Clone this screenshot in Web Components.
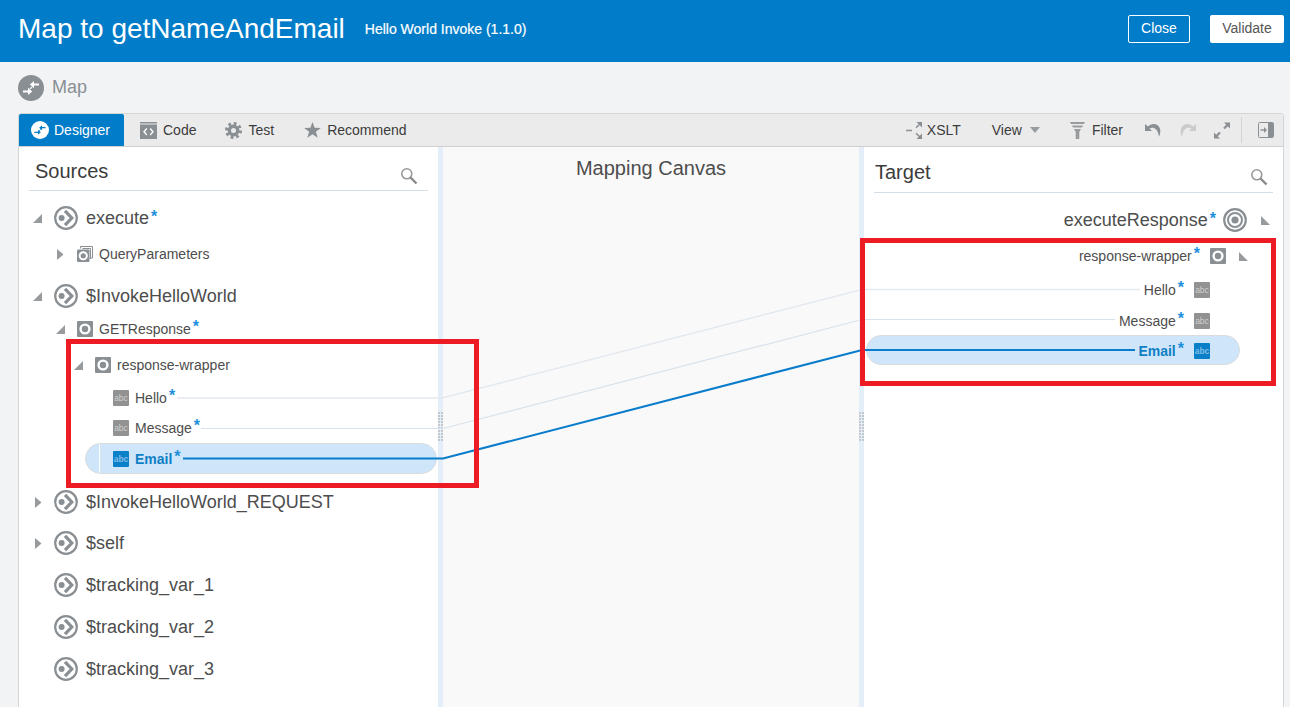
<!DOCTYPE html>
<html>
<head>
<meta charset="utf-8">
<title>Map to getNameAndEmail</title>
<style>
  html, body { margin: 0; height: 707px; overflow: hidden; background: #f2f3f5; font-family: "Liberation Sans", Arial, sans-serif; }
</style>
</head>
<body>
<map-page>
  <map-header slot="header" heading="Map to getNameAndEmail" sub="Hello World Invoke (1.1.0)"></map-header>
  <map-toolbar slot="toolbar"></map-toolbar>

  <tree-panel slot="sources" heading="Sources" style="--head:44px;--pad-l:6px;--pad-r:10px">
    <tree-row big star toggle="open" icon="exec" style="margin-top:9px">execute</tree-row>
    <tree-row level="1" toggle="closed" icon="query" style="margin-top:3px">QueryParameters</tree-row>
    <tree-row big toggle="open" icon="exec" style="margin-top:9px">$InvokeHelloWorld</tree-row>
    <tree-row level="1" star toggle="open" icon="node">GETResponse</tree-row>
    <tree-row level="2" toggle="open" icon="node" style="margin-top:6px">response-wrapper</tree-row>
    <tree-row level="3" star icon="abc" style="margin-top:3px">Hello</tree-row>
    <tree-row level="3" star icon="abc">Message</tree-row>
    <tree-row level="3" star icon="abc" selected>Email</tree-row>
    <tree-row big toggle="closed" icon="exec" style="margin-top:10px">$InvokeHelloWorld_REQUEST</tree-row>
    <tree-row big toggle="closed" icon="exec" style="margin-top:5px">$self</tree-row>
    <tree-row big toggle="none" icon="exec" style="margin-top:6px">$tracking_var_1</tree-row>
    <tree-row big toggle="none" icon="exec" style="margin-top:6px">$tracking_var_2</tree-row>
    <tree-row big toggle="none" icon="exec" style="margin-top:6px">$tracking_var_3</tree-row>
  </tree-panel>

  <tree-panel slot="target" heading="Target" style="--head:46px;--pad-l:1px;--pad-r:5px">
    <tree-row right big star toggle="open" icon="target" style="margin-top:9px">executeResponse</tree-row>
    <tree-row right level="2" star toggle="open" icon="node" style="margin-top:3px">response-wrapper</tree-row>
    <tree-row right level="3" star icon="abc" style="margin-top:4px">Hello</tree-row>
    <tree-row right level="3" star icon="abc" style="margin-top:1px">Message</tree-row>
    <tree-row right level="3" star icon="abc" selected style="margin-top:-1px">Email</tree-row>
  </tree-panel>
</map-page>

<script>
const GRAY = '#8a8f94';

function mapArrows(c) {
  return `<path d="M21 9.600H15.500M5 16.400H10.500" stroke="${c}" stroke-width="2"/><path d="M11.800 9.600 16 6V13.200zM14.200 16.400 10 12.800V20z" fill="${c}"/><path d="M12 13.800 14 12.200" stroke="${c}" stroke-width="1.400"/>`;
}

// every icon of the screen, keyed by name
const ICONS = {
  exec: `<svg width="24" height="24" viewBox="0 0 24 24"><circle cx="12" cy="12" r="10.800" fill="none" stroke="${GRAY}" stroke-width="2.200"/><circle cx="7.600" cy="12" r="3" fill="${GRAY}"/><path d="M11 4.800 17.800 12 11 19.200" fill="none" stroke="${GRAY}" stroke-width="3.200"/></svg>`,
  target: `<svg width="24" height="24" viewBox="0 0 24 24"><circle cx="12" cy="12" r="10.800" fill="none" stroke="${GRAY}" stroke-width="2.200"/><circle cx="12" cy="12" r="7" fill="none" stroke="${GRAY}" stroke-width="2"/><circle cx="12" cy="12" r="3.600" fill="${GRAY}"/></svg>`,
  node: `<svg width="16" height="16" viewBox="0 0 16 16"><rect width="16" height="16" rx="1" fill="${GRAY}"/><circle cx="8" cy="8" r="4.400" fill="none" stroke="#fff" stroke-width="2.400"/></svg>`,
  query: `<svg width="16" height="16" viewBox="0 0 16 16"><path d="M3.500 2.500V.5H15.500V12H13.500M5.500 2.500H13.500V13" fill="none" stroke="${GRAY}"/><rect y="3.500" width="12.500" height="12.500" rx="1" fill="${GRAY}"/><circle cx="6.250" cy="9.750" r="3.600" fill="none" stroke="#fff" stroke-width="2"/></svg>`,
  abc: `<svg width="16" height="16" viewBox="0 0 16 16"><rect width="16" height="16" rx="1" fill="var(--abc-bg,#929292)"/><text x="8" y="10.800" font-family="Liberation Sans, Arial, sans-serif" font-size="8.500" text-anchor="middle" fill="var(--abc-fg,#cfcfcf)">abc</text></svg>`,
  map: `<svg width="26" height="26" viewBox="0 0 26 26"><circle cx="13" cy="13" r="13" fill="${GRAY}"/>${mapArrows('#fff')}</svg>`,
  designer: `<svg width="18" height="18" viewBox="0 0 26 26"><circle cx="13" cy="13" r="13" fill="#fff"/>${mapArrows('#007cc8')}</svg>`,
  code: `<svg width="17" height="17" viewBox="0 0 17 17"><rect width="17" height="1.500" fill="${GRAY}"/><rect y="2.500" width="17" height="14.500" fill="${GRAY}"/><path d="M6.800 6.500 4 9.700 6.800 13M10.200 6.500 13 9.700 10.200 13" fill="none" stroke="#fff" stroke-width="1.400"/></svg>`,
  gear: `<svg width="17" height="17" viewBox="0 0 17 17"><circle cx="8.500" cy="8.500" r="7" fill="none" stroke="${GRAY}" stroke-width="3" stroke-dasharray="2.750 2.750"/><circle cx="8.500" cy="8.500" r="4.200" fill="none" stroke="${GRAY}" stroke-width="3.400"/></svg>`,
  star: `<svg width="17" height="16" viewBox="0 0 17 16"><path d="M8.500 0 10.600 5.800 16.800 6 11.900 9.800 13.700 15.800 8.500 12.300 3.300 15.800 5.100 9.800.2 6 6.400 5.800z" fill="${GRAY}"/></svg>`,
  xslt: `<svg width="17" height="17" viewBox="0 0 17 17"><path d="M0 8.500H6" stroke="${GRAY}" stroke-width="1.500"/><path d="M10 5.800 14.500 1.500M10 11.200 14.500 15.500" stroke="${GRAY}" stroke-width="1.500"/><path d="M16 0V5.500L10.500 0zM16 17V11.500L10.500 17z" fill="${GRAY}"/></svg>`,
  filter: `<svg width="15" height="17" viewBox="0 0 15 17"><path d="M0 0H15L14 2H1zM2 3.500H13L12 5.500H3zM4 7H11L9.300 10V17H5.700V10z" fill="#999c9f"/></svg>`,
  undo: `<svg width="17" height="15" viewBox="0 0 17 15"><path d="M0 1V8H7L4.500 5.500C8 3.500 13 5 14 13.800 17 8 15 1 8.500 1 6.500 1 4.500 2 3 3.500Z" fill="${GRAY}"/></svg>`,
  redo: `<svg width="17" height="15" viewBox="0 0 17 15"><path d="M17 1V8H10L12.500 5.500C9 3.500 4 5 3 13.800 0 8 2 1 8.500 1 10.500 1 12.500 2 14 3.500Z" fill="#c9cbcd"/></svg>`,
  expand: `<svg width="18" height="17" viewBox="0 0 18 17"><path d="M1 16.500V10.500L7 16.500zM17 .5V6.500L11 .5z" fill="${GRAY}"/><path d="M7 10.500 3.500 14M11 6.500 14.500 3" stroke="${GRAY}" stroke-width="2.200"/></svg>`,
  dock: `<svg width="16" height="16" viewBox="0 0 16 16"><rect x=".5" y=".5" width="15" height="15" rx="1" fill="none" stroke="${GRAY}"/><rect x="10" y="1" width="5" height="14" fill="${GRAY}"/><path d="M2.500 8H7" stroke="${GRAY}" stroke-width="1.400"/><path d="M6 5 9 8 6 11z" fill="${GRAY}"/></svg>`,
  search: `<svg width="18" height="18" viewBox="0 0 18 18"><circle cx="6.800" cy="6.800" r="5" fill="none" stroke="#999" stroke-width="1.600"/><path d="M10.500 10.500 16.500 16.500" stroke="#8a8a8a" stroke-width="2.400"/></svg>`
};

class UiIcon extends HTMLElement {
  constructor() {
    super();
    this.attachShadow({ mode: 'open' });
    this.shadowRoot.innerHTML = `<style>:host{display:inline-flex;flex:none}svg{display:block}</style>${ICONS[this.getAttribute('name')] || ''}`;
  }
}
customElements.define('ui-icon', UiIcon);

class MapHeader extends HTMLElement {
  constructor() {
    super();
    this.attachShadow({ mode: 'open' });
    this.shadowRoot.innerHTML = `
      <style>
        :host { display: flex; align-items: center; height: 62px; box-sizing: border-box; padding: 0 6px 0 18px; background: #007cc8; color: #fff; }
        h1 { margin: 0 20px 4px 0; font-size: 28px; font-weight: normal; line-height: 32px; }
        .sub { font-size: 14px; margin-top: -4px; -webkit-text-stroke: .2px #fff; flex: 1; }
        button { font: inherit; font-size: 14px; height: 28px; box-sizing: border-box; border-radius: 2px; padding: 0 0 2px; margin-bottom: 5px; }
        .close { width: 62px; margin-right: 20px; background: transparent; border: 1px solid #fff; color: #fff; }
        .validate { width: 74px; background: #fff; border: 0; color: #555; }
      </style>
      <h1>${this.getAttribute('heading')}</h1>
      <span class="sub">${this.getAttribute('sub')}</span>
      <button class="close">Close</button>
      <button class="validate">Validate</button>`;
  }
}
customElements.define('map-header', MapHeader);

class MapToolbar extends HTMLElement {
  constructor() {
    super();
    this.attachShadow({ mode: 'open' });
    this.shadowRoot.innerHTML = `
      <style>
        :host { display: flex; align-items: center; height: 33px; box-sizing: border-box; background: #ebebeb; border-bottom: 1px solid #d0d0d0; font-size: 14px; color: #3c3c3c; border-radius: 3px 3px 0 0; }
        .item { display: flex; align-items: center; gap: 6px; white-space: nowrap; }
        .designer { width: 105px; height: 32px; box-sizing: border-box; padding-left: 12px; gap: 5px; background: #007cc8; color: #fff; border-radius: 2px 2px 0 0; margin-right: 16px; }
        .caret { width: 0; height: 0; border: 5px solid transparent; border-top: 6px solid #999c9f; border-bottom: 0; margin-left: 2px; }
        .rule { width: 1px; height: 26px; background: #d4d4d4; margin: 0 10px; }
      </style>
      <span class="item designer"><ui-icon name="designer"></ui-icon>Designer</span>
      <span class="item" style="margin-right:29px"><ui-icon name="code"></ui-icon>Code</span>
      <span class="item" style="margin-right:30px"><ui-icon name="gear"></ui-icon>Test</span>
      <span class="item"><ui-icon name="star"></ui-icon>Recommend</span>
      <span style="flex:1"></span>
      <span class="item" style="gap:4px;margin-right:31px"><ui-icon name="xslt"></ui-icon>XSLT</span>
      <span class="item" style="margin-right:30px">View <i class="caret"></i></span>
      <span class="item" style="gap:7px;margin-right:22px"><ui-icon name="filter"></ui-icon>Filter</span>
      <ui-icon name="undo" style="margin-right:17px"></ui-icon>
      <ui-icon name="redo" style="margin-right:17px"></ui-icon>
      <ui-icon name="expand"></ui-icon>
      <i class="rule"></i>
      <ui-icon name="dock" style="margin:0 9px 0 6px"></ui-icon>`;
  }
}
customElements.define('map-toolbar', MapToolbar);

class TreePanel extends HTMLElement {
  constructor() {
    super();
    this.attachShadow({ mode: 'open' });
    this.shadowRoot.innerHTML = `
      <style>
        :host { display: block; width: 419px; background: #fff; overflow: hidden; }
        header { display: flex; align-items: center; justify-content: space-between; height: var(--head); box-sizing: border-box; margin: 0 10px; padding: 6px var(--pad-r) 0 var(--pad-l); border-bottom: 1px solid #d5dee6; }
        h2 { margin: 0; font-size: 20px; font-weight: normal; color: #3c3c3c; }
        ui-icon { margin-top: 8px; }
      </style>
      <header><h2>${this.getAttribute('heading')}</h2><ui-icon name="search"></ui-icon></header>
      <slot></slot>`;
  }
}
customElements.define('tree-panel', TreePanel);

// geometry per tree level: start of the toggle, width of the toggle, gap to the label
const LEVELS = {
  big: { pad: 14, tog: 21, gap: 8, nudge: 2 },
  1: { pad: 37, tog: 21, gap: 6, nudge: 1 },
  2: { pad: 55, tog: 21, gap: 6, nudge: 0 },
  3: { pad: 94, tog: 0, gap: 6, nudge: 0 }
};
const RIGHT_LEVELS = {
  big: { pad: 13, tog: 23, gap: 7 },
  2: { pad: 35, tog: 22, gap: 10 },
  3: { pad: 73, tog: 0, gap: 10 }
};

class TreeRow extends HTMLElement {
  constructor() {
    super();
    this.attachShadow({ mode: 'open' });
    const right = this.hasAttribute('right');
    const big = this.hasAttribute('big');
    const key = big ? 'big' : this.getAttribute('level');
    const lv = (right ? RIGHT_LEVELS : LEVELS)[key];
    const selected = this.hasAttribute('selected');
    const toggle = this.getAttribute('toggle');
    const triFill = '#989b9e';

    let tri = '';
    if (toggle === 'open') {
      tri = right
        ? `<svg width="9" height="9" viewBox="0 0 10 10"><path d="M0 0 10 10H0z" fill="${triFill}"/></svg>`
        : `<svg width="9" height="9" viewBox="0 0 10 10"><path d="M10 0V10H0z" fill="${triFill}"/></svg>`;
    } else if (toggle === 'closed') {
      tri = `<svg width="7" height="11" viewBox="0 0 7 11" style="margin-left:${lv.nudge}px"><path d="M0 0 6.500 5.500 0 11z" fill="${triFill}"/></svg>`;
    }

    // selected rows are pills that start left of the label and stop short of the other edge
    const inset = selected ? (right ? 43 : 66) : 0;
    const pad = lv.pad - inset - (selected ? 1 : 0);
    this.shadowRoot.innerHTML = `
      <style>
        :host {
          display: flex; align-items: center; box-sizing: border-box;
          height: ${selected ? (right ? 30 : 31) : big ? 36 : 30}px;
          font-size: ${big ? 18 : 14}px; color: #4d4d4d; white-space: nowrap;
          flex-direction: ${right ? 'row-reverse' : 'row'};
          padding-${right ? 'right' : 'left'}: ${pad}px;
          ${selected ? `
            margin-${right ? 'right' : 'left'}: ${inset}px;
            padding-top: 1px;
            ${right ? 'margin-left:2px;' : 'margin-right:1px;'}
            border: 1px solid #d9dcdf; border-radius: 16px;
            background: ${right ? '' : 'linear-gradient(to right,transparent 13px,#fff 13px,#fff 14px,transparent 14px),'} #cfe6fa;
            color: #0f7fc4; font-weight: bold;
            --abc-bg: #0a80c8; --abc-fg: #7fbce6;` : ''}
        }
        .tog { width: ${lv.tog}px; flex: none; display: flex; justify-content: ${right ? 'flex-end' : 'flex-start'}; }
        .tog svg { display: block; }
        .label { margin-${right ? 'right' : 'left'}: ${lv.gap}px; }
        .star { color: #1f8fdc; font-size: 16px; font-weight: bold; line-height: 0; vertical-align: 2px; margin-left: 2px; }
      </style>
      <span class="tog">${tri}</span>
      <ui-icon name="${this.getAttribute('icon')}"></ui-icon>
      <span class="label"><slot></slot>${this.hasAttribute('star') ? '<span class="star">*</span>' : ''}</span>`;
  }
}
customElements.define('tree-row', TreeRow);

class SplitGrip extends HTMLElement {
  constructor() {
    super();
    this.attachShadow({ mode: 'open' });
    this.shadowRoot.innerHTML = `
      <style>
        :host { display: flex; align-items: center; width: 5px; background: #e3eef8; flex: none; height: 560px; }
        i { display: block; width: 5px; height: 30px;
            background: repeating-linear-gradient(to bottom,#c4c8cc 0 2px,transparent 2px 3px);
            -webkit-mask: linear-gradient(to right,#000 0 2px,transparent 2px 3px,#000 3px 5px); mask: linear-gradient(to right,#000 0 2px,transparent 2px 3px,#000 3px 5px); }
      </style>
      <i></i>`;
  }
}
customElements.define('split-grip', SplitGrip);

// the mapping lines and the two red annotation boxes lie over the columns
class MapOverlay extends HTMLElement {
  constructor() {
    super();
    this.attachShadow({ mode: 'open' });
    this.shadowRoot.innerHTML = `
      <style>:host{position:absolute;left:0;top:0;width:1290px;height:707px;pointer-events:none}svg{display:block}</style>
      <svg width="1290" height="707" fill="none">
        <path d="M177 398H442L862 289.500H1140" stroke="#e4e9ee" stroke-width="1.500"/>
        <path d="M201 428.500H443L862 319.500H1115" stroke="#d9e2ea" stroke-width="1.200"/>
        <path d="M183 458.500H443L862 350H1135" stroke="#0a7ccc" stroke-width="2"/>
        <rect x="68.500" y="341.500" width="408" height="144" stroke="#ed1c24" stroke-width="5"/>
        <rect x="862.500" y="240.500" width="411" height="143" stroke="#ed1c24" stroke-width="5"/>
      </svg>`;
  }
}
customElements.define('map-overlay', MapOverlay);

class MapPage extends HTMLElement {
  constructor() {
    super();
    this.attachShadow({ mode: 'open' });
    this.shadowRoot.innerHTML = `
      <style>
        :host { display: block; position: relative; width: 1290px; height: 707px; overflow: hidden; font-family: "Liberation Sans", Arial, sans-serif; }
        .crumb { display: flex; align-items: center; gap: 8px; height: 51px; box-sizing: border-box; padding: 0 0 0 18px; font-size: 18px; color: #8a8f94; }
        .panel { margin: 0 6px 0 18px; border: 1px solid #d5d5d5; border-radius: 3px 3px 0 0; background: #fff; }
        .cols { display: flex; height: 560px; }
        .canvas { flex: 1; background: #f9f9fa; text-align: center; font-size: 20px; color: #4d4d4d; padding-top: 10px; box-sizing: border-box; }
      </style>
      <slot name="header"></slot>
      <div class="crumb"><ui-icon name="map"></ui-icon>Map</div>
      <div class="panel">
        <slot name="toolbar"></slot>
        <div class="cols">
          <slot name="sources"></slot>
          <split-grip></split-grip>
          <div class="canvas">Mapping Canvas</div>
          <split-grip></split-grip>
          <slot name="target"></slot>
        </div>
      </div>
      <map-overlay></map-overlay>`;
  }
}
customElements.define('map-page', MapPage);
</script>
</body>
</html>
